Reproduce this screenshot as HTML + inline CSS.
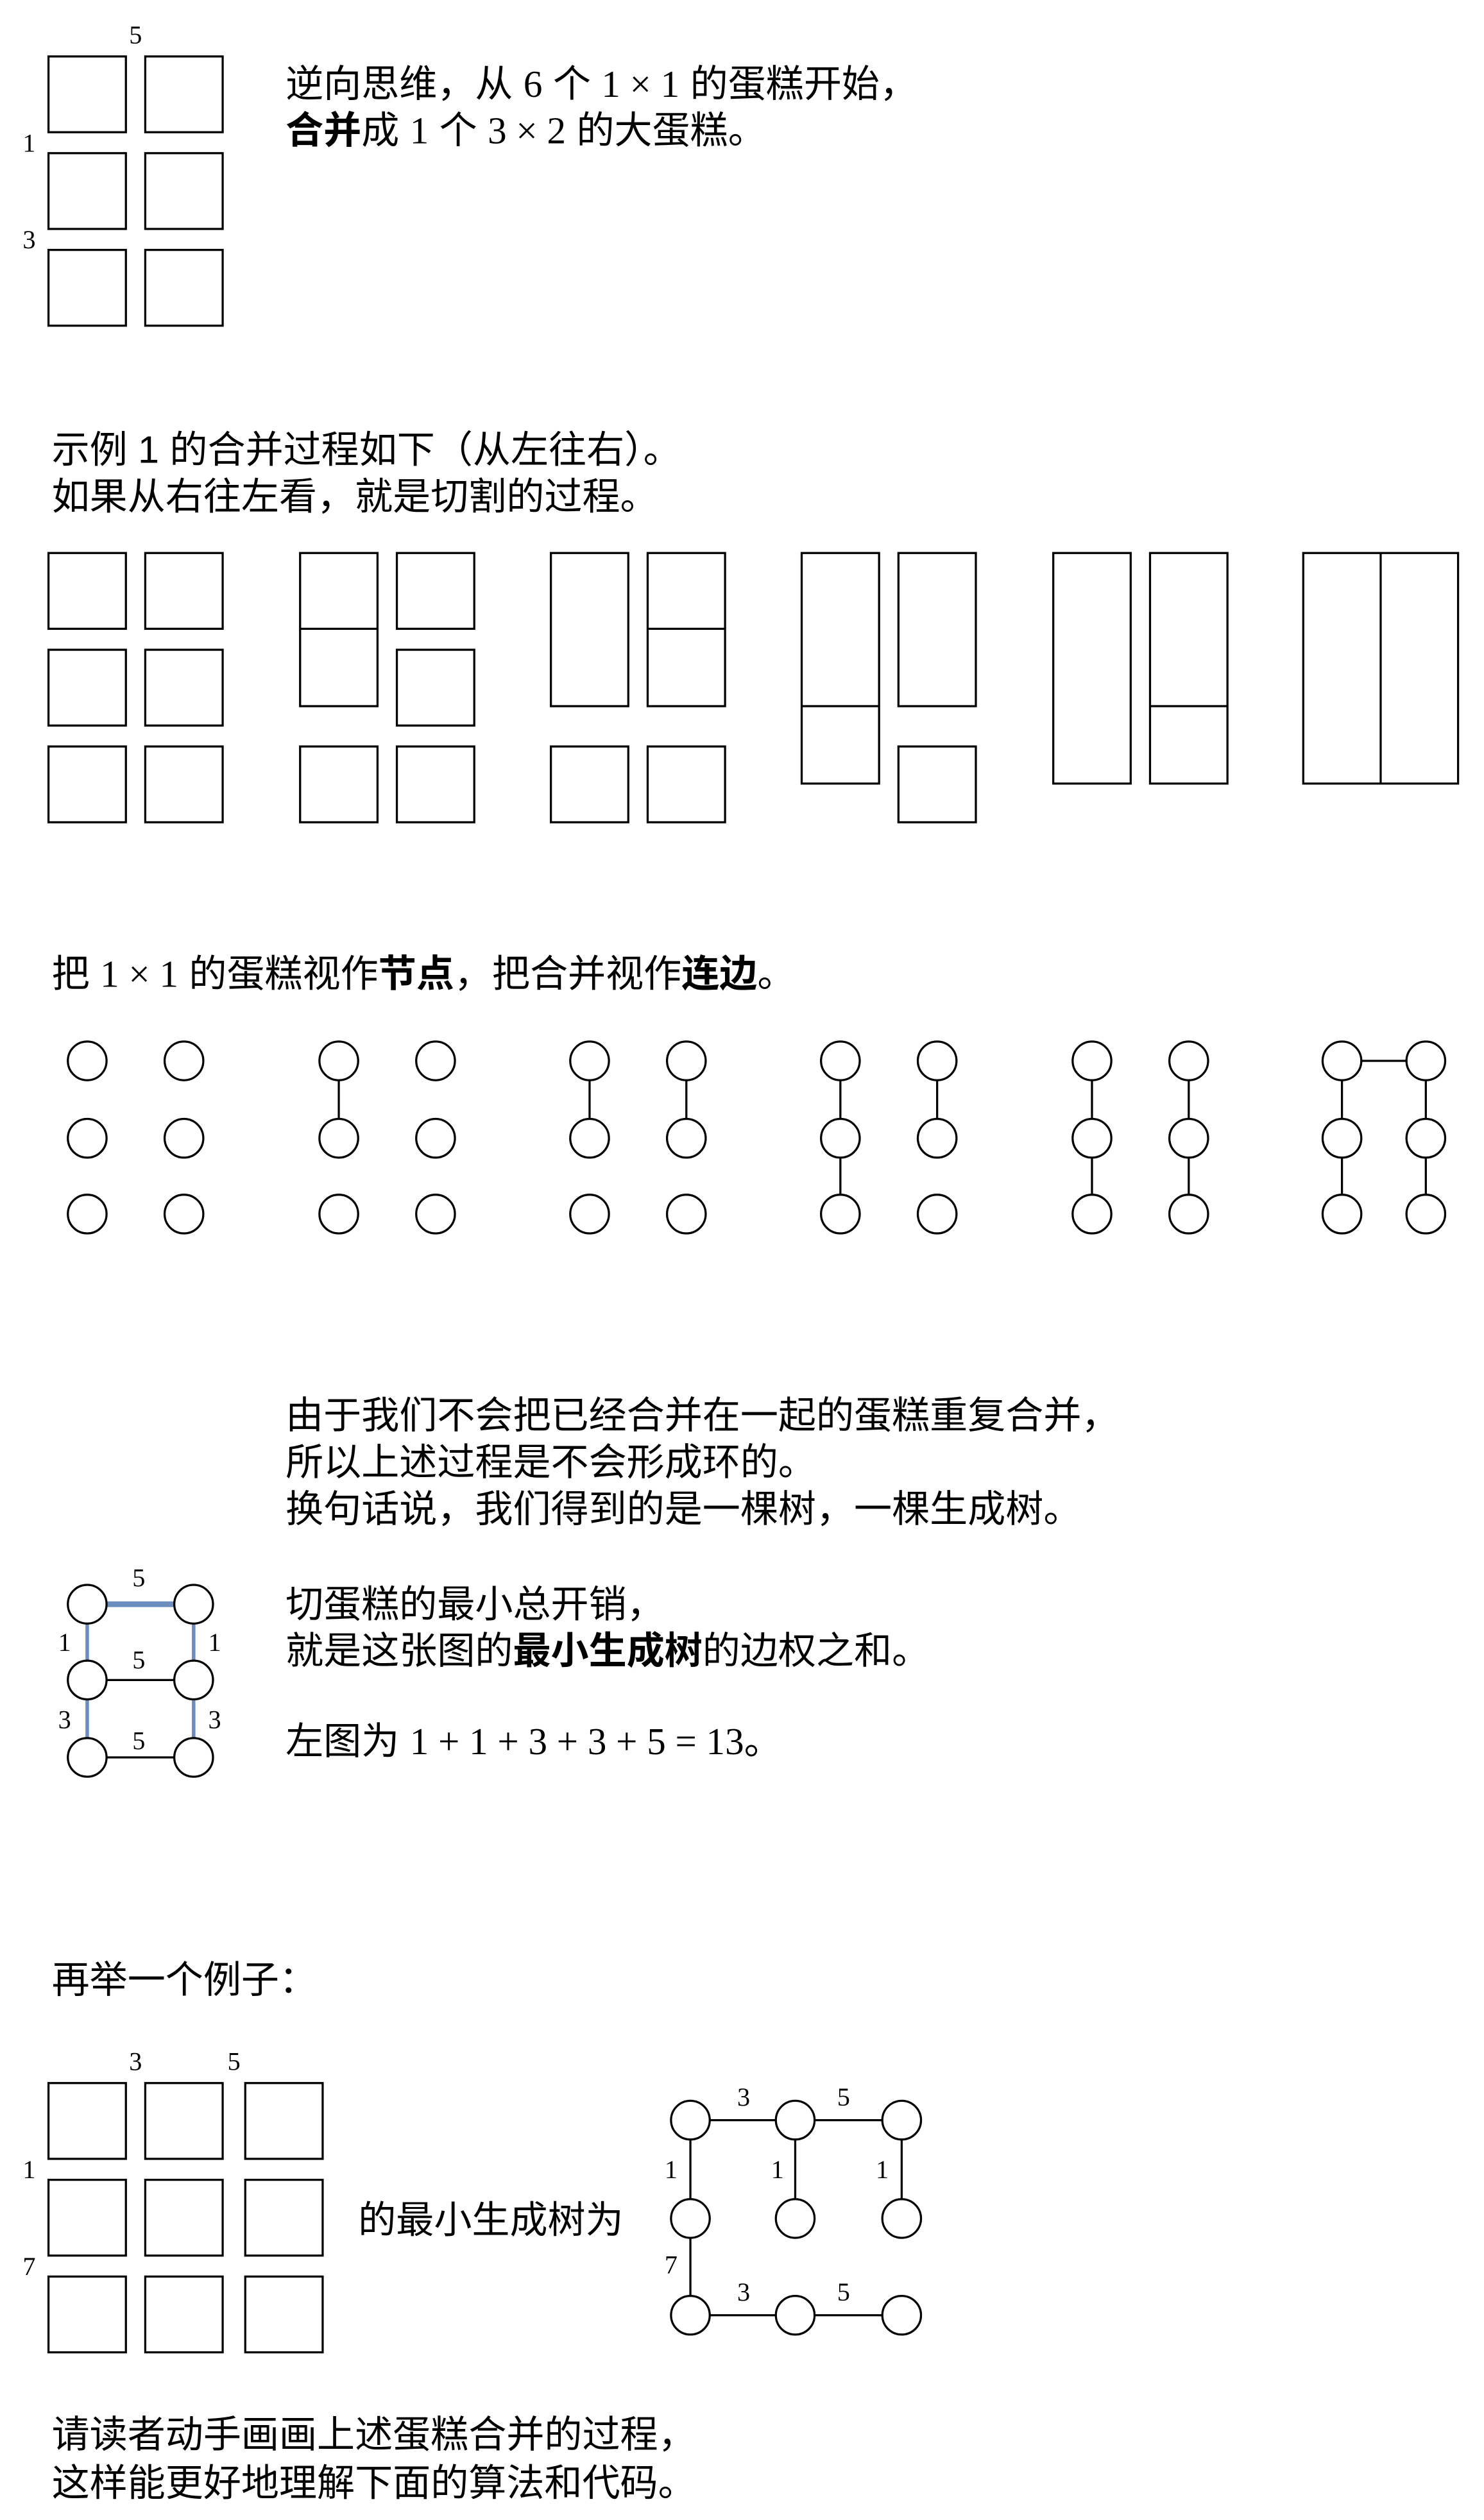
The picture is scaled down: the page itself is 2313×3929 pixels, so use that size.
<!DOCTYPE html>
<html><head><meta charset="utf-8"><style>
html,body{margin:0;padding:0;background:#fff;}
svg{display:block;}
.t{font-family:"Liberation Sans","Noto Sans CJK SC",sans-serif;font-size:23.5px;fill:#000;}
.m{font-family:"Liberation Serif",serif;}
.l{font-family:"Liberation Serif",serif;font-size:16px;fill:#000;text-anchor:middle;}
.b{font-weight:bold;}
rect,line,circle{fill:none;stroke:#000;stroke-width:1.3;}
circle{fill:#fff;}
</style></head><body>
<svg width="2313" height="3929" viewBox="0 0 920 1563" xmlns="http://www.w3.org/2000/svg">
<!-- section 1 -->
<rect x="30" y="35" width="48" height="47"/><rect x="90" y="35" width="48" height="47"/>
<rect x="30" y="95" width="48" height="47"/><rect x="90" y="95" width="48" height="47"/>
<rect x="30" y="155" width="48" height="47"/><rect x="90" y="155" width="48" height="47"/>
<text class="l" x="84" y="27">5</text><text class="l" x="18" y="94">1</text><text class="l" x="18" y="154">3</text>
<text class="t" x="177" y="60">逆向思维，从 <tspan class="m">6</tspan> 个 <tspan class="m">1 × 1</tspan> 的蛋糕开始，</text>
<text class="t" x="177" y="89"><tspan class="b">合并</tspan>成 <tspan class="m">1</tspan> 个 <tspan class="m">3 × 2</tspan> 的大蛋糕。</text>
<!-- section 2 -->
<text class="t" x="32" y="287">示例 1 的合并过程如下（从左往右）。</text>
<text class="t" x="32" y="316">如果从右往左看，就是切割的过程。</text>
<g>
<rect x="30" y="343" width="48" height="47"/><rect x="90" y="343" width="48" height="47"/>
<rect x="30" y="403" width="48" height="47"/><rect x="90" y="403" width="48" height="47"/>
<rect x="30" y="463" width="48" height="47"/><rect x="90" y="463" width="48" height="47"/>
</g>
<g transform="translate(156,0)">
<rect x="30" y="343" width="48" height="95"/><line x1="30" y1="390" x2="78" y2="390"/>
<rect x="90" y="343" width="48" height="47"/><rect x="90" y="403" width="48" height="47"/>
<rect x="30" y="463" width="48" height="47"/><rect x="90" y="463" width="48" height="47"/>
</g>
<g transform="translate(311.5,0)">
<rect x="30" y="343" width="48" height="95"/>
<rect x="90" y="343" width="48" height="95"/><line x1="90" y1="390" x2="138" y2="390"/>
<rect x="30" y="463" width="48" height="47"/><rect x="90" y="463" width="48" height="47"/>
</g>
<g transform="translate(467,0)">
<rect x="30" y="343" width="48" height="143"/><line x1="30" y1="438" x2="78" y2="438"/>
<rect x="90" y="343" width="48" height="95"/>
<rect x="90" y="463" width="48" height="47"/>
</g>
<g transform="translate(623,0)">
<rect x="30" y="343" width="48" height="143"/>
<rect x="90" y="343" width="48" height="143"/><line x1="90" y1="438" x2="138" y2="438"/>
</g>
<g transform="translate(778,0)">
<rect x="30" y="343" width="96" height="143"/><line x1="78" y1="343" x2="78" y2="486"/>
</g>
<!-- section 3 -->
<text class="t" x="32" y="612">把 <tspan class="m">1 × 1</tspan> 的蛋糕视作<tspan class="b">节点</tspan>，把合并视作<tspan class="b">连边</tspan>。</text>
<g transform="translate(156,0)"><line x1="54" y1="658" x2="54" y2="706"/></g>
<g transform="translate(311.5,0)"><line x1="54" y1="658" x2="54" y2="706"/><line x1="114" y1="658" x2="114" y2="706"/></g>
<g transform="translate(467,0)"><line x1="54" y1="658" x2="54" y2="753"/><line x1="114" y1="658" x2="114" y2="706"/></g>
<g transform="translate(623,0)"><line x1="54" y1="658" x2="54" y2="753"/><line x1="114" y1="658" x2="114" y2="753"/></g>
<g transform="translate(778,0)"><line x1="54" y1="658" x2="54" y2="753"/><line x1="106" y1="658" x2="106" y2="753"/><line x1="54" y1="658" x2="106" y2="658"/></g>
<g id="c1"><circle cx="54" cy="658" r="12"/><circle cx="114" cy="658" r="12"/><circle cx="54" cy="706" r="12"/><circle cx="114" cy="706" r="12"/><circle cx="54" cy="753" r="12"/><circle cx="114" cy="753" r="12"/></g>
<g transform="translate(156,0)"><circle cx="54" cy="658" r="12"/><circle cx="114" cy="658" r="12"/><circle cx="54" cy="706" r="12"/><circle cx="114" cy="706" r="12"/><circle cx="54" cy="753" r="12"/><circle cx="114" cy="753" r="12"/></g>
<g transform="translate(311.5,0)"><circle cx="54" cy="658" r="12"/><circle cx="114" cy="658" r="12"/><circle cx="54" cy="706" r="12"/><circle cx="114" cy="706" r="12"/><circle cx="54" cy="753" r="12"/><circle cx="114" cy="753" r="12"/></g>
<g transform="translate(467,0)"><circle cx="54" cy="658" r="12"/><circle cx="114" cy="658" r="12"/><circle cx="54" cy="706" r="12"/><circle cx="114" cy="706" r="12"/><circle cx="54" cy="753" r="12"/><circle cx="114" cy="753" r="12"/></g>
<g transform="translate(623,0)"><circle cx="54" cy="658" r="12"/><circle cx="114" cy="658" r="12"/><circle cx="54" cy="706" r="12"/><circle cx="114" cy="706" r="12"/><circle cx="54" cy="753" r="12"/><circle cx="114" cy="753" r="12"/></g>
<g transform="translate(778,0)"><circle cx="54" cy="658" r="12"/><circle cx="106" cy="658" r="12"/><circle cx="54" cy="706" r="12"/><circle cx="106" cy="706" r="12"/><circle cx="54" cy="753" r="12"/><circle cx="106" cy="753" r="12"/></g>
<!-- section 4 -->
<text class="t" x="177" y="886">由于我们不会把已经合并在一起的蛋糕重复合并，</text>
<text class="t" x="177" y="915">所以上述过程是不会形成环的。</text>
<text class="t" x="177" y="944">换句话说，我们得到的是一棵树，一棵生成树。</text>
<line x1="54" y1="995" x2="120" y2="995" style="stroke:#6c8ebf;stroke-width:3.5"/>
<line x1="54" y1="995" x2="54" y2="1090" style="stroke:#6c8ebf;stroke-width:2.2"/>
<line x1="120" y1="995" x2="120" y2="1090" style="stroke:#6c8ebf;stroke-width:2.2"/>
<line x1="54" y1="1042" x2="120" y2="1042"/><line x1="54" y1="1090" x2="120" y2="1090"/>
<circle cx="54" cy="995" r="12"/><circle cx="120" cy="995" r="12"/><circle cx="54" cy="1042" r="12"/><circle cx="120" cy="1042" r="12"/><circle cx="54" cy="1090" r="12"/><circle cx="120" cy="1090" r="12"/>
<text class="l" x="86" y="984">5</text><text class="l" x="40" y="1024">1</text><text class="l" x="133" y="1024">1</text>
<text class="l" x="86" y="1035">5</text><text class="l" x="40" y="1072">3</text><text class="l" x="133" y="1072">3</text>
<text class="l" x="86" y="1085">5</text>
<text class="t" x="177" y="1003">切蛋糕的最小总开销，</text>
<text class="t" x="177" y="1032">就是这张图的<tspan class="b">最小生成树</tspan>的边权之和。</text>
<text class="t" x="177" y="1088">左图为 <tspan class="m">1 + 1 + 3 + 3 + 5 = 13</tspan>。</text>
<!-- section 5 -->
<text class="t" x="32" y="1236">再举一个例子：</text>
<rect x="30" y="1292" width="48" height="47"/><rect x="90" y="1292" width="48" height="47"/><rect x="152" y="1292" width="48" height="47"/>
<rect x="30" y="1352" width="48" height="47"/><rect x="90" y="1352" width="48" height="47"/><rect x="152" y="1352" width="48" height="47"/>
<rect x="30" y="1412" width="48" height="47"/><rect x="90" y="1412" width="48" height="47"/><rect x="152" y="1412" width="48" height="47"/>
<text class="l" x="84" y="1284">3</text><text class="l" x="145" y="1284">5</text><text class="l" x="18" y="1351">1</text><text class="l" x="18" y="1411">7</text>
<text class="t" x="222" y="1385">的最小生成树为</text>
<line x1="428" y1="1315" x2="559" y2="1315"/><line x1="428" y1="1315" x2="428" y2="1436"/>
<line x1="493" y1="1315" x2="493" y2="1376"/><line x1="559" y1="1315" x2="559" y2="1376"/>
<line x1="428" y1="1436" x2="559" y2="1436"/>
<circle cx="428" cy="1315" r="12"/><circle cx="493" cy="1315" r="12"/><circle cx="559" cy="1315" r="12"/>
<circle cx="428" cy="1376" r="12"/><circle cx="493" cy="1376" r="12"/><circle cx="559" cy="1376" r="12"/>
<circle cx="428" cy="1436" r="12"/><circle cx="493" cy="1436" r="12"/><circle cx="559" cy="1436" r="12"/>
<text class="l" x="461" y="1306">3</text><text class="l" x="523" y="1306">5</text>
<text class="l" x="416" y="1351">1</text><text class="l" x="482" y="1351">1</text><text class="l" x="547" y="1351">1</text>
<text class="l" x="416" y="1410">7</text><text class="l" x="461" y="1427">3</text><text class="l" x="523" y="1427">5</text>
<text class="t" x="32" y="1518">请读者动手画画上述蛋糕合并的过程，</text>
<text class="t" x="32" y="1548">这样能更好地理解下面的算法和代码。</text>
</svg>
</body></html>
